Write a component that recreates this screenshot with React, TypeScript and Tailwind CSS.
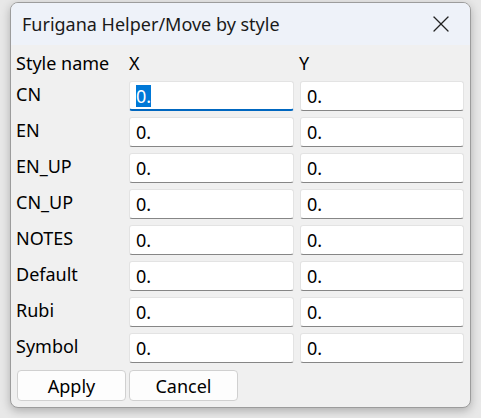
import { X } from "lucide-react";

const styles = ["CN", "EN", "EN_UP", "CN_UP", "NOTES", "Default", "Rubi", "Symbol"];

function ValueBox({ focused, wide }: { focused?: boolean; wide?: boolean }) {
  return (
    <div
      className={`flex h-[30px] items-center rounded-[3px] border border-[#e3e3e3] bg-white pl-[6px] text-[18px] leading-none text-black ${
        wide ? "w-[165px]" : "w-[164px]"
      } ${focused ? "border-b-2 border-b-[#0067c0]" : "border-b-[#868686]"}`}
    >
      {focused ? <span className="bg-[#0078d7] py-[2px] text-white">0.</span> : <span>0.</span>}
    </div>
  );
}

export default function App() {
  return (
    <div className="h-[418px] w-[481px] bg-[#e8e8e8] pl-[10px] pt-[2px]" style={{ fontFamily: '"Noto Sans", "Open Sans", sans-serif' }}>
      <div className="flex h-[406px] w-[461px] flex-col overflow-hidden rounded-[8px] border border-[#9c9c9c] bg-[#f0f0f0] shadow-[0_3px_10px_rgba(0,0,0,0.25)]">
        <div className="flex h-[42px] shrink-0 items-center justify-between bg-[#eef2f9] pl-[11px] pr-[15px]">
          <span className="text-[18px] text-[#1a1a1a]">Furigana Helper/Move by style</span>
          <X size={28} strokeWidth={1.1} className="text-[#222]" />
        </div>
        <div className="flex flex-col px-[5px]">
          <div className="flex h-[36px] items-center text-[18px] text-black">
            <span className="w-[113px]">Style name</span>
            <span className="w-[170px]">X</span>
            <span>Y</span>
          </div>
          <div className="flex flex-col gap-[6px]">
            {styles.map((name, i) => (
              <div key={name} className="flex items-center">
                <span className="w-[113px] -translate-y-[2px] text-[18px] text-black">{name}</span>
                <ValueBox focused={i === 0} wide />
                <div className="w-[6px]" />
                <ValueBox />
              </div>
            ))}
          </div>
          <div className="mt-[7px] flex gap-[3px] pl-[1px]">
            <button className="h-[31px] w-[109px] rounded-[4px] border border-[#d0d0d0] bg-[#fdfdfd] text-[18px] leading-none text-black">Apply</button>
            <button className="h-[31px] w-[109px] rounded-[4px] border border-[#d0d0d0] bg-[#fdfdfd] text-[18px] leading-none text-black">Cancel</button>
          </div>
        </div>
      </div>
    </div>
  );
}
